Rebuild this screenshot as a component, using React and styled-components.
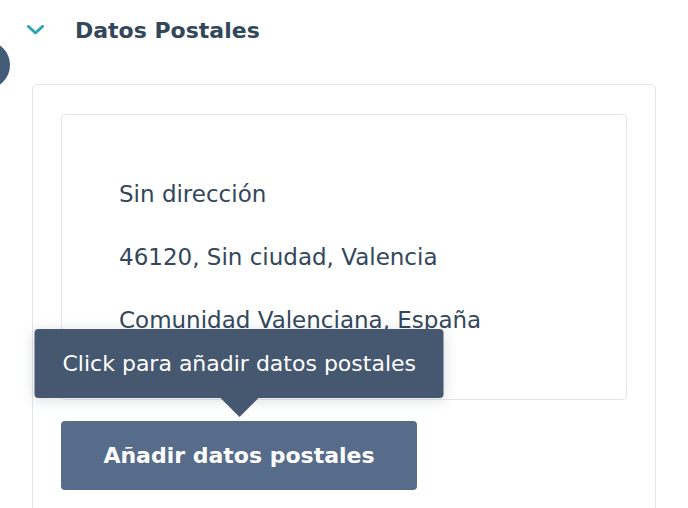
import React from "react";
import styled, { createGlobalStyle } from "styled-components";

const GlobalStyle = createGlobalStyle`
  html, body { margin: 0; padding: 0; background: #ffffff; }
  body { font-family: "DejaVu Sans", "Open Sans", sans-serif; overflow: hidden; }
  * { box-sizing: border-box; }
`;

const Page = styled.div`
  position: relative;
  width: 688px;
  height: 508px;
  overflow: hidden;
`;

const Avatar = styled.div`
  position: absolute;
  left: -38px;
  top: 41px;
  width: 48px;
  height: 48px;
  border-radius: 50%;
  background: #425b76;
`;

const Header = styled.div`
  display: flex;
  align-items: center;
  gap: 31px;
  height: 60px;
  padding-left: 27px;
  margin-bottom: 24px;
`;

const Chevron = styled.svg`
  width: 17px;
  height: 10px;
  flex: none;
`;

const Title = styled.h2`
  margin: 0;
  font-size: 22px;
  font-weight: 700;
  color: #33475b;
`;

const Card = styled.div`
  margin-left: 32px;
  width: 624px;
  height: 460px;
  border: 1px solid #e3e6ee;
  border-radius: 5px;
  padding: 29px 28px;
`;

const AddressBox = styled.div`
  width: 566px;
  height: 286px;
  border: 1px solid #e3e6ee;
  border-radius: 4px;
  padding: 64px 57px 0;
  display: flex;
  flex-direction: column;
  gap: 33px;
`;

const Line = styled.p`
  margin: 0;
  font-size: 23px;
  line-height: 30px;
  color: #33475b;
`;

const ButtonWrap = styled.div`
  position: relative;
  width: 356px;
  margin-top: 21px;
`;

const Button = styled.button`
  width: 100%;
  height: 69px;
  border: none;
  border-radius: 4px;
  background: #566c8a;
  color: #ffffff;
  font-family: inherit;
  font-size: 22px;
  font-weight: 700;
  cursor: pointer;
`;

const Tooltip = styled.div`
  position: absolute;
  left: 50%;
  bottom: calc(100% + 23px);
  transform: translateX(-50%);
  width: 409px;
  height: 69px;
  border-radius: 4px;
  background: #45586f;
  color: #ffffff;
  font-size: 22px;
  display: flex;
  align-items: center;
  padding-left: 28px;
  white-space: nowrap;
  box-shadow: 0 2px 14px rgba(45, 62, 80, 0.18);

  &::after {
    content: "";
    position: absolute;
    left: 50%;
    top: 100%;
    transform: translateX(-50%);
    border-left: 19px solid transparent;
    border-right: 19px solid transparent;
    border-top: 19px solid #45586f;
  }
`;

export default function App() {
  return (
    <Page>
      <GlobalStyle />
      <Avatar />
      <Header>
        <Chevron viewBox="0 0 17 10">
          <path d="M1.5 1.5 L8.5 8 L15.5 1.5" fill="none" stroke="#2fa3b9" strokeWidth="3" strokeLinecap="round" strokeLinejoin="round" />
        </Chevron>
        <Title>Datos Postales</Title>
      </Header>
      <Card>
        <AddressBox>
          <Line>Sin dirección</Line>
          <Line>46120, Sin ciudad, Valencia</Line>
          <Line>Comunidad Valenciana, España</Line>
        </AddressBox>
        <ButtonWrap>
          <Tooltip>Click para añadir datos postales</Tooltip>
          <Button>Añadir datos postales</Button>
        </ButtonWrap>
      </Card>
    </Page>
  );
}
